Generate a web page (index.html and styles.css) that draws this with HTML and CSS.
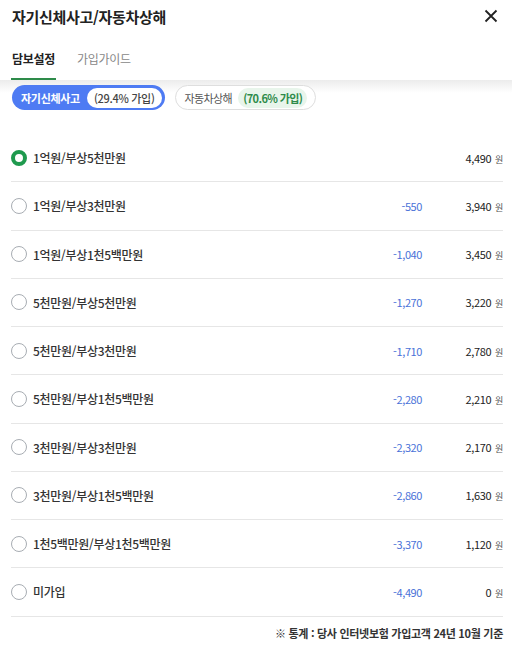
FILE: index.html
```html
<!DOCTYPE html>
<html lang="ko">
<head>
<meta charset="utf-8">
<link rel="stylesheet" href="styles.css">
</head>
<body>
<div class="sheet">
  <header class="head">
    <h1 class="title">자기신체사고/자동차상해</h1>
    <button class="close" aria-label="닫기">
      <svg width="14" height="14" viewBox="0 0 14 14"><path d="M1.5 1.5 L12.5 12.5 M12.5 1.5 L1.5 12.5" stroke="#222" stroke-width="1.8" fill="none"/></svg>
    </button>
  </header>
  <nav class="tabs">
    <span class="tab active">담보설정</span>
    <span class="tab">가입가이드</span>
  </nav>
  <section class="filters">
    <span class="pill on">자기신체사고<span class="rate">(29.4% 가입)</span></span>
    <span class="pill off">자동차상해<span class="rate">(70.6% 가입)</span></span>
  </section>
  <ul class="list">
    <li class="row"><span class="radio checked"></span><span class="label">1억원/부상5천만원</span><span class="diff"></span><span class="price">4,490<small>원</small></span></li>
    <li class="row"><span class="radio"></span><span class="label">1억원/부상3천만원</span><span class="diff">-550</span><span class="price">3,940<small>원</small></span></li>
    <li class="row"><span class="radio"></span><span class="label">1억원/부상1천5백만원</span><span class="diff">-1,040</span><span class="price">3,450<small>원</small></span></li>
    <li class="row"><span class="radio"></span><span class="label">5천만원/부상5천만원</span><span class="diff">-1,270</span><span class="price">3,220<small>원</small></span></li>
    <li class="row"><span class="radio"></span><span class="label">5천만원/부상3천만원</span><span class="diff">-1,710</span><span class="price">2,780<small>원</small></span></li>
    <li class="row"><span class="radio"></span><span class="label">5천만원/부상1천5백만원</span><span class="diff">-2,280</span><span class="price">2,210<small>원</small></span></li>
    <li class="row"><span class="radio"></span><span class="label">3천만원/부상3천만원</span><span class="diff">-2,320</span><span class="price">2,170<small>원</small></span></li>
    <li class="row"><span class="radio"></span><span class="label">3천만원/부상1천5백만원</span><span class="diff">-2,860</span><span class="price">1,630<small>원</small></span></li>
    <li class="row"><span class="radio"></span><span class="label">1천5백만원/부상1천5백만원</span><span class="diff">-3,370</span><span class="price">1,120<small>원</small></span></li>
    <li class="row"><span class="radio"></span><span class="label">미가입</span><span class="diff">-4,490</span><span class="price">0<small>원</small></span></li>
  </ul>
  <p class="note">※ 통계 : 당사 인터넷보험 가입고객 24년 10월 기준</p>
</div>
</body>
</html>
```
FILE: styles.css
```css
* { box-sizing: border-box; }
html, body { margin: 0; padding: 0; background: #fff; }
body {
  font-family: "Noto Sans CJK KR", "Noto Sans", sans-serif;
  color: #222;
}
.sheet { width: 512px; }
.head {
  height: 32px;
  display: flex;
  align-items: center;
  justify-content: space-between;
  padding: 0 12px 0 12px;
}
.title {
  margin: 0;
  font-size: 15px;
  font-weight: 700;
  letter-spacing: -0.3px;
  color: #222;
}
.close {
  border: 0;
  background: none;
  padding: 0;
  width: 14px;
  height: 14px;
  margin-right: 2px;
  display: flex;
}
.tabs {
  height: 48px;
  display: flex;
  align-items: flex-end;
  gap: 21px;
  padding: 0 12px;
}
.tab {
  font-size: 12px;
  color: #888;
  height: 30px;
  letter-spacing: -0.3px;
}
.tab.active {
  font-weight: 700;
  color: #222;
  border-bottom: 2px solid #2e8b4a;
  padding: 0 1px;
  margin-left: -1px;
}
.filters {
  background: linear-gradient(to bottom, #ececec 0, #fff 13px);
  padding: 5px 12px 0;
  display: flex;
  gap: 10px;
  height: 54px;
}
.pill {
  display: inline-flex;
  align-items: center;
  height: 25px;
  border-radius: 13px;
  font-size: 11px;
  letter-spacing: -0.3px;
  gap: 7px;
  white-space: nowrap;
}
.pill .rate {
  height: 20px;
  border-radius: 10px;
  display: inline-flex;
  align-items: center;
  padding: 0 7px;
}
.pill.on {
  background: #4e7bf3;
  color: #fff;
  font-weight: 700;
  padding: 0 3px 0 9px;
}
.pill.on .rate {
  background: #fff;
  color: #444;
  font-weight: 500;
}
.pill.off {
  background: #fff;
  border: 1px solid #dedede;
  color: #555;
  padding: 0 8px 0 9px;
  letter-spacing: -0.6px;
  gap: 6px;
}
.pill.off .rate {
  background: #e8f5eb;
  color: #2e8b4a;
  font-weight: 700;
  padding: 0 5px;
}
.list {
  list-style: none;
  margin: 0 9px 0 11px;
  padding: 0;
}
.row {
  height: 48.25px;
  display: flex;
  align-items: center;
  border-bottom: 1px solid #e6e6e6;
}
.radio {
  width: 16px;
  height: 16px;
  border-radius: 50%;
  border: 1px solid #a8adb3;
  flex: none;
  margin-right: 6px;
}
.radio.checked {
  border: 4.5px solid #1f9a4e;
  background: #fff;
}
.label {
  flex: 1;
  font-size: 12px;
  font-weight: 500;
  color: #333;
  letter-spacing: -0.3px;
}
.diff {
  font-size: 11px;
  color: #4a72d8;
  text-align: right;
  width: 80px;
  letter-spacing: -0.4px;
}
.price {
  width: 81px;
  text-align: right;
  font-size: 11px;
  color: #222;
  letter-spacing: -0.4px;
}
.price small {
  font-size: 9px;
  color: #555;
  margin-left: 4px;
}
.note {
  margin: 0;
  padding: 0 9px 0 0;
  height: 33px;
  display: flex;
  align-items: center;
  justify-content: flex-end;
  font-size: 11px;
  font-weight: 700;
  color: #333;
  letter-spacing: -0.3px;
}
```
